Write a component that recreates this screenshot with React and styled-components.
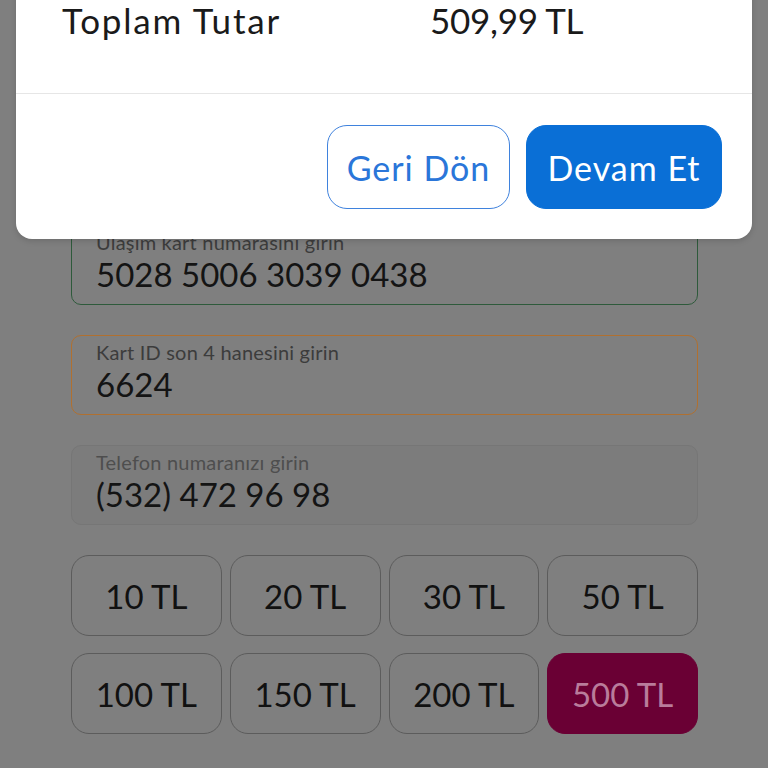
import React from "react";
import styled, { createGlobalStyle } from "styled-components";

const Global = createGlobalStyle`
  html, body { margin: 0; padding: 0; }
  body {
    background: #7f7f7f;
    font-family: Lato, "Noto Sans", "Liberation Sans", sans-serif;
    font-weight: 400;
    overflow: hidden;
  }
`;

const Page = styled.div`
  position: relative;
  width: 768px;
  height: 768px;
  background: #7f7f7f;
  overflow: hidden;
`;

const Content = styled.div`
  display: flex;
  flex-direction: column;
  gap: 30px;
  padding: 225px 70px 0 71px;
`;

const Field = styled.div`
  height: 80px;
  box-sizing: border-box;
  border: 1.5px solid ${(p) => p.$border};
  border-radius: 10px;
  background: ${(p) => p.$bg || "transparent"};
  padding: 4px 24px 0;
  display: flex;
  flex-direction: column;
`;

const FieldLabel = styled.span`
  font-size: 20px;
  line-height: 24px;
  letter-spacing: 0.2px;
  color: ${(p) => p.$color || "#3c3c3c"};
`;

const FieldValue = styled.span`
  font-size: 33px;
  line-height: 40px;
  color: #141414;
`;

const Amounts = styled.div`
  display: grid;
  grid-template-columns: repeat(4, 1fr);
  column-gap: 8px;
  row-gap: 17px;
`;

const Amount = styled.div`
  height: 81px;
  box-sizing: border-box;
  border-radius: 18px;
  border: 1px solid ${(p) => (p.$active ? "#6a0034" : "#5c5c5c")};
  background: ${(p) => (p.$active ? "#6a0034" : "transparent")};
  color: ${(p) => (p.$active ? "#b97c9b" : "#111")};
  font-size: 33px;
  display: flex;
  align-items: center;
  justify-content: center;
`;

const Modal = styled.div`
  position: absolute;
  top: -40px;
  left: 16px;
  width: 736px;
  background: #fff;
  border-radius: 16px;
  box-shadow: 0 2px 6px rgba(0, 0, 0, 0.15);
`;

const Summary = styled.div`
  display: grid;
  grid-template-columns: 368px 1fr;
  padding: 40px 46px 53px;
  font-size: 35px;
  line-height: 40px;
  color: #1a1a1a;
  border-bottom: 1.5px solid #e6e6e6;
`;

const SummaryLabel = styled.span`
  letter-spacing: 1.8px;
`;

const SummaryValue = styled.span`
  letter-spacing: -0.3px;
`;

const Footer = styled.div`
  display: flex;
  justify-content: flex-end;
  gap: 16px;
  padding: 31px 30px 30px;
`;

const ActionButton = styled.button`
  height: 84px;
  width: ${(p) => p.$w}px;
  box-sizing: border-box;
  border-radius: 20px;
  font-family: inherit;
  font-weight: 400;
  font-size: 34px;
  letter-spacing: 1px;
  cursor: pointer;
  border: 1.5px solid ${(p) => (p.$primary ? "#0a6fd6" : "#3f82dd")};
  background: ${(p) => (p.$primary ? "#0a6fd6" : "#fff")};
  color: ${(p) => (p.$primary ? "#fff" : "#2a76d9")};
`;

const amounts = ["10 TL", "20 TL", "30 TL", "50 TL", "100 TL", "150 TL", "200 TL", "500 TL"];

export default function App() {
  return (
    <Page>
      <Global />
      <Content>
        <Field $border="#2e5a3b">
          <FieldLabel>Ulaşım kart numarasını girin</FieldLabel>
          <FieldValue>5028 5006 3039 0438</FieldValue>
        </Field>
        <Field $border="#b07030">
          <FieldLabel>Kart ID son 4 hanesini girin</FieldLabel>
          <FieldValue>6624</FieldValue>
        </Field>
        <Field $border="#767676" $bg="#7c7c7c">
          <FieldLabel $color="#4e4e4e">Telefon numaranızı girin</FieldLabel>
          <FieldValue>(532) 472 96 98</FieldValue>
        </Field>
        <Amounts>
          {amounts.map((a) => (
            <Amount key={a} $active={a === "500 TL"}>
              {a}
            </Amount>
          ))}
        </Amounts>
      </Content>
      <Modal>
        <Summary>
          <SummaryLabel>Toplam Tutar</SummaryLabel>
          <SummaryValue>509,99 TL</SummaryValue>
        </Summary>
        <Footer>
          <ActionButton $w={183}>Geri Dön</ActionButton>
          <ActionButton $w={196} $primary>
            Devam Et
          </ActionButton>
        </Footer>
      </Modal>
    </Page>
  );
}
